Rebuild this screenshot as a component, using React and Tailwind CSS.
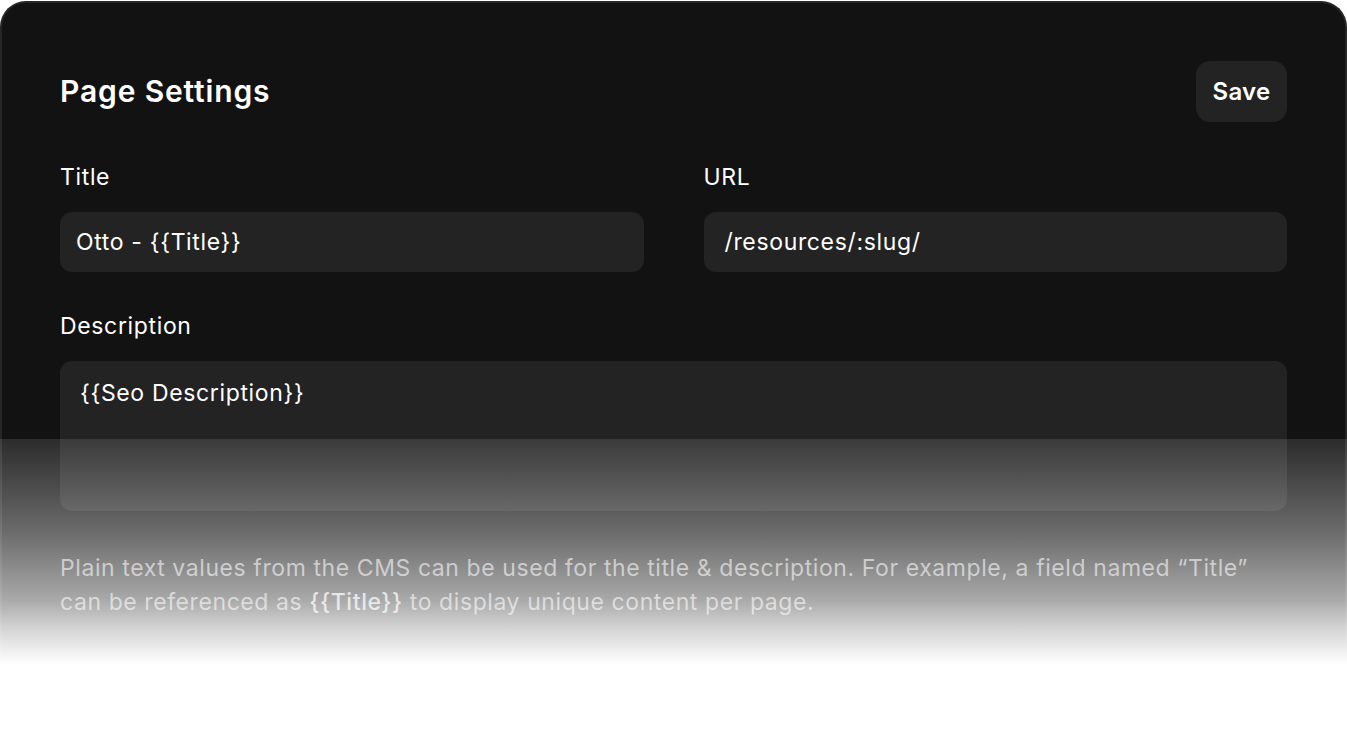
export default function App() {
  return (
    <div className="relative w-[1347px] h-[745px] bg-white overflow-hidden" style={{ fontFamily: "Inter, 'Liberation Sans', sans-serif" }}>
      <div className="pt-px h-full">
        <div className="h-full rounded-t-[26px] border-x-2 border-t-2 border-[#262626] bg-[#121212] px-[58px] pt-[58px]">
          <div className="flex items-center justify-between">
            <h1 className="text-[30px] font-semibold text-white tracking-[0.85px]">Page Settings</h1>
            <button className="h-[61px] w-[91px] rounded-[14px] bg-[#232323] text-[24px] font-semibold text-white tracking-[0.3px]">Save</button>
          </div>
          <div className="mt-[40px] grid grid-cols-2 gap-[60px] tracking-[0.65px]">
            <div>
              <div className="text-[23px] text-white leading-[30px]">Title</div>
              <div className="mt-[20px] h-[60px] rounded-[12px] bg-[#232323] px-[16px] flex items-center text-[23px] text-white">Otto - {"{{Title}}"}</div>
            </div>
            <div>
              <div className="text-[23px] text-white leading-[30px]">URL</div>
              <div className="mt-[20px] h-[60px] rounded-[12px] bg-[#232323] px-[21px] flex items-center text-[23px] text-white">/resources/:slug/</div>
            </div>
          </div>
          <div className="mt-[39px] tracking-[0.65px]">
            <div className="text-[23px] text-white leading-[30px]">Description</div>
            <div className="mt-[20px] h-[150px] rounded-[12px] bg-[#232323] px-[20px] pt-[16px] text-[23px] text-white leading-[32px]">{"{{Seo Description}}"}</div>
          </div>
          <p className="mt-[40px] text-[23px] leading-[34px] tracking-[0.58px] text-[#9a9a9a]">
            Plain text values from the CMS can be used for the title &amp; description. For example, a field named “Title” can be referenced as <span className="font-medium text-[#bdbdbd]">{"{{Title}}"}</span> to display unique content per page.
          </p>
        </div>
      </div>
      <div className="pointer-events-none absolute left-0 right-0 top-[439px] bottom-0 bg-[linear-gradient(to_bottom,rgba(255,255,255,0.11)_0px,rgba(255,255,255,0.26)_53px,rgba(255,255,255,0.39)_96px,rgba(255,255,255,0.5)_126px,rgba(255,255,255,0.64)_161px,rgba(255,255,255,0.8)_186px,rgba(255,255,255,0.93)_211px,rgba(255,255,255,1)_226px)]" />
    </div>
  );
}
